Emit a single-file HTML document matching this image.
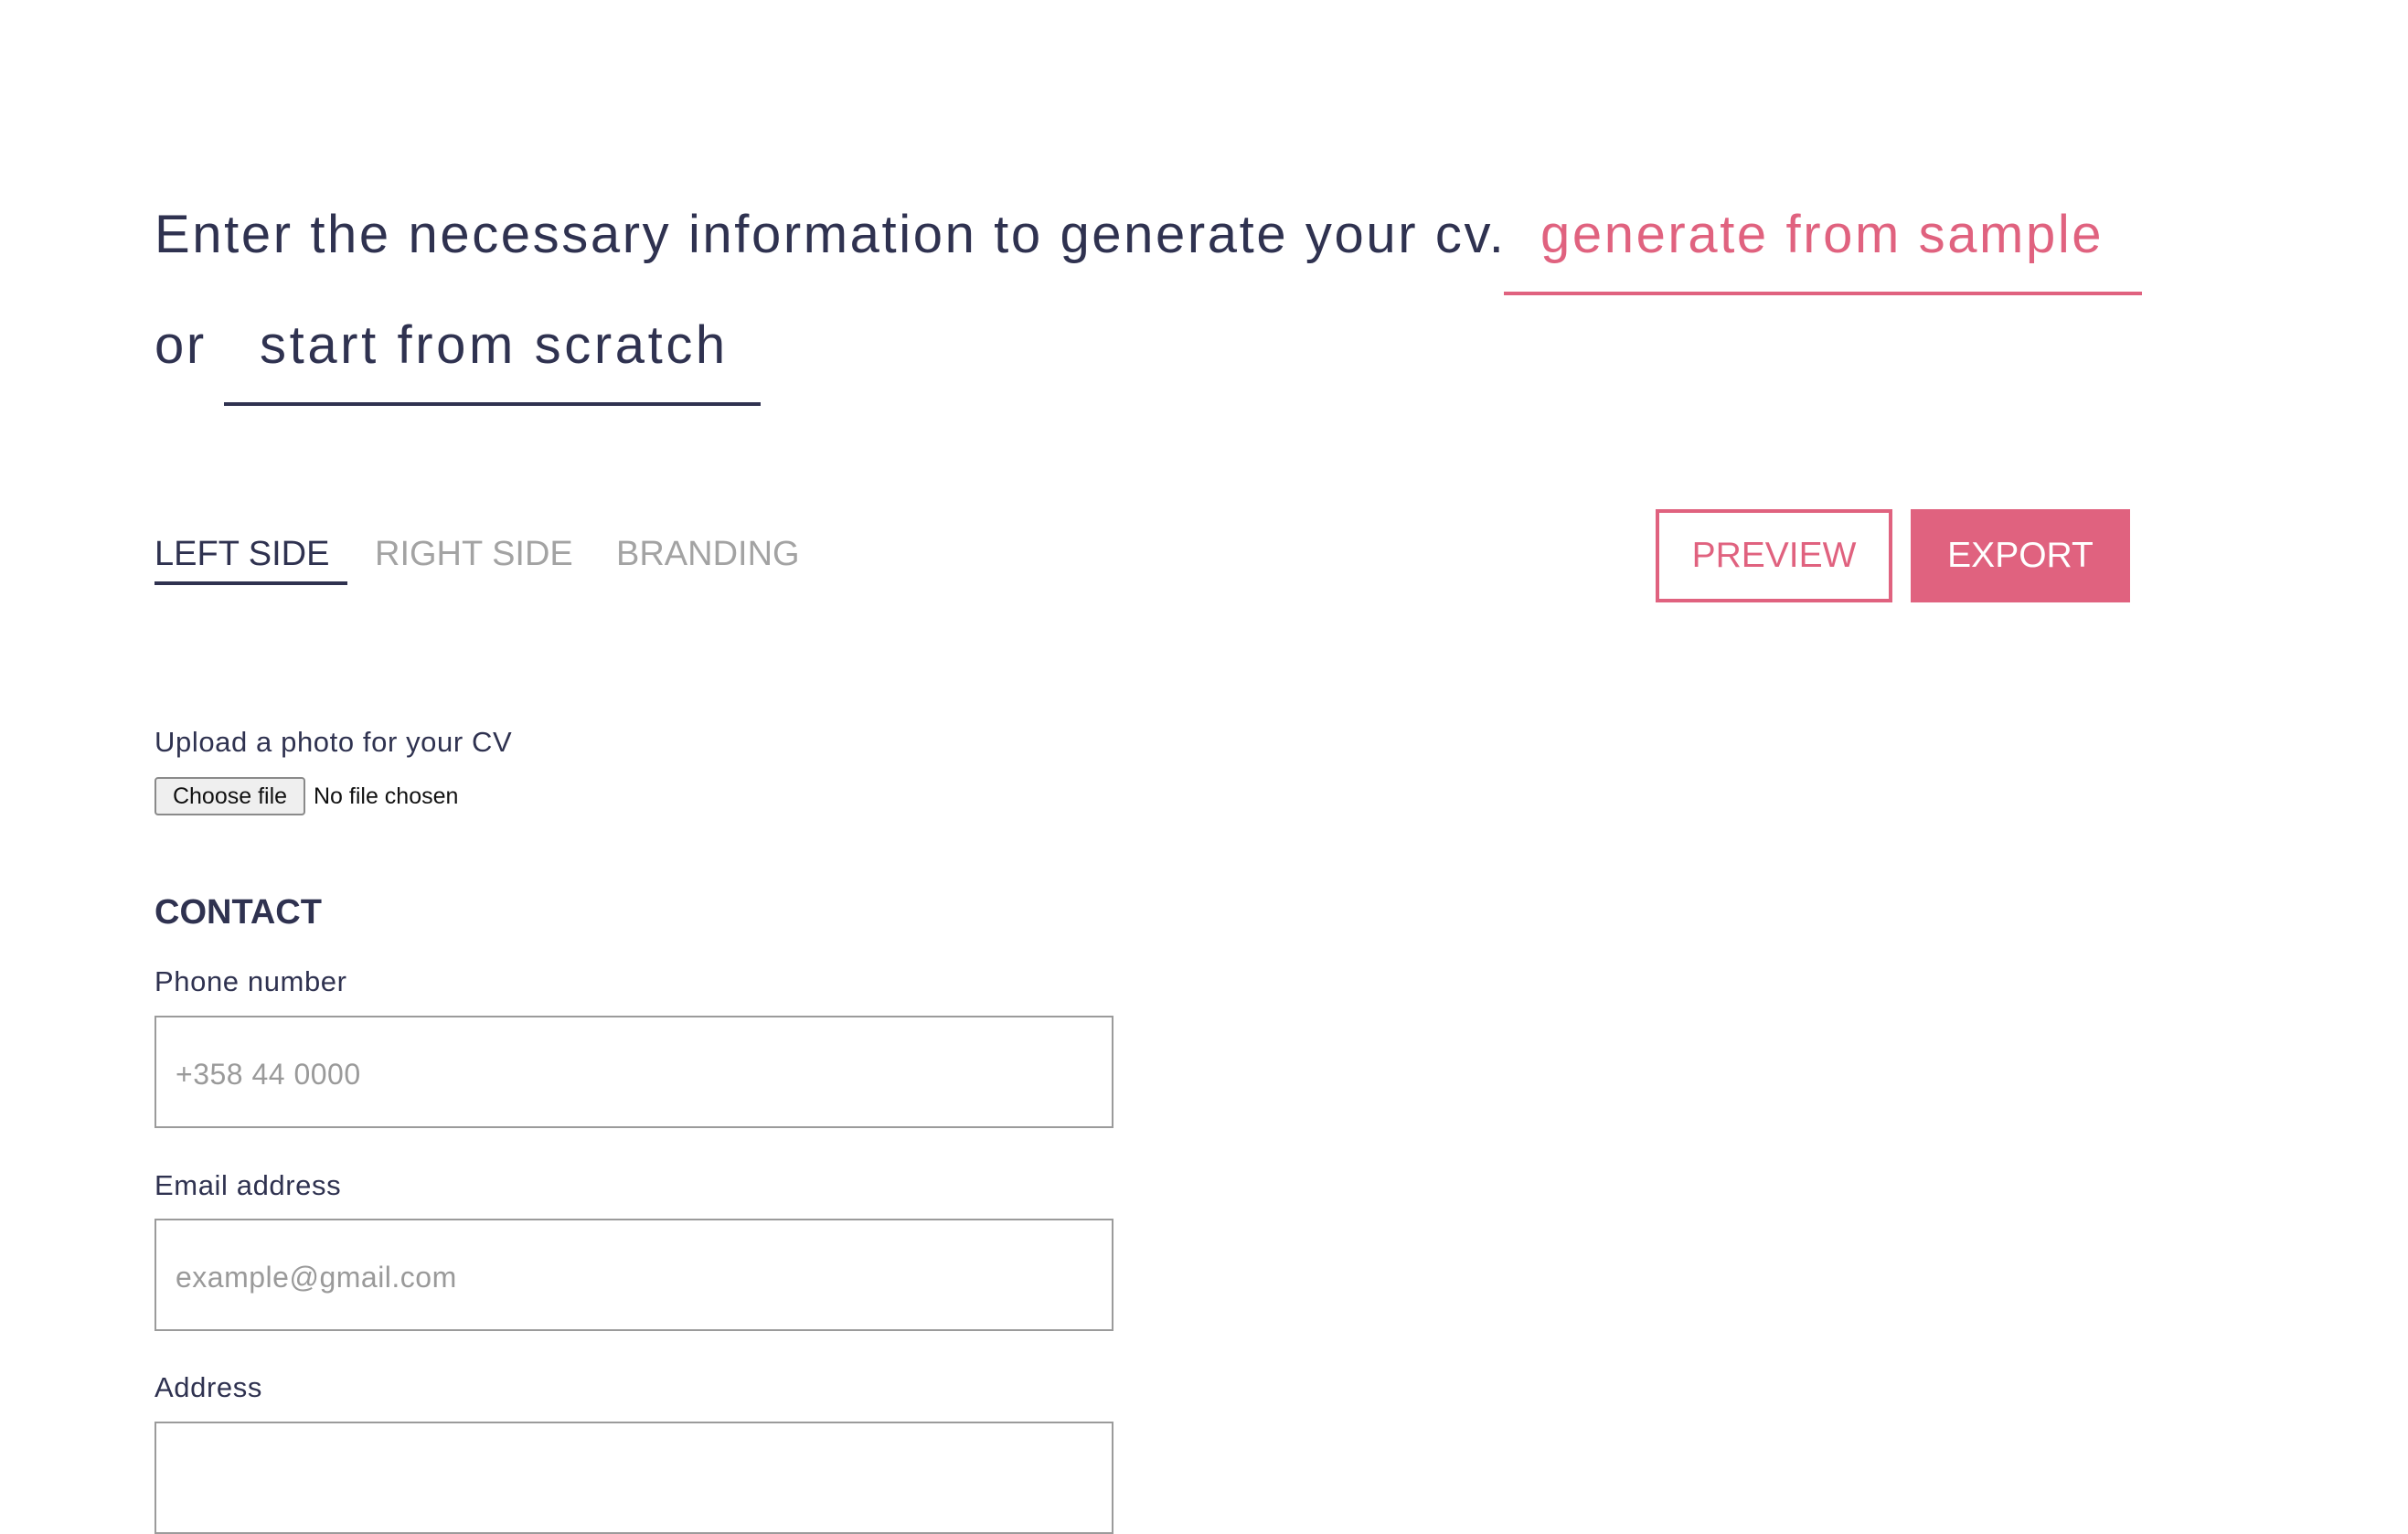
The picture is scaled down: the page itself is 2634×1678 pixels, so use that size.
<!DOCTYPE html>
<html><head><meta charset="utf-8"><style>
*{margin:0;padding:0;box-sizing:border-box}
body{width:2634px;height:1586px;background:#fff;position:relative;overflow:hidden;font-family:"Liberation Sans",sans-serif;color:#2f3250}
.a{position:absolute;white-space:nowrap}
.h{font-size:58px;line-height:1;letter-spacing:2.6px}
.pink{color:#e0627f}
.tab{font-size:38px;line-height:1;top:587px}
.lbl{font-size:31px;line-height:1;left:169px;letter-spacing:0.6px}
.inp{position:absolute;left:169px;width:1049px;height:123px;border:2px solid #9b9b9b;background:#fff}
.ph{position:absolute;left:21px;top:44px;font-size:32px;color:#9a9a9a;letter-spacing:0.5px}
</style></head><body>
<div class="a h" style="left:169px;top:228px">Enter the necessary information to generate your cv.</div>
<div class="a h pink" style="left:1685px;top:228px">generate from sample</div>
<div class="a" style="left:1645px;top:319px;width:698px;height:4px;background:#e0627f"></div>
<div class="a h" style="left:169px;top:349px">or</div>
<div class="a h" style="left:284px;top:349px;letter-spacing:3.6px">start from scratch</div>
<div class="a" style="left:245px;top:440px;width:587px;height:4px;background:#2f3250"></div>

<div class="a tab" style="left:169px">LEFT SIDE</div>
<div class="a" style="left:169px;top:636px;width:211px;height:4px;background:#2f3250"></div>
<div class="a tab" style="left:410px;color:#a3a3a3">RIGHT SIDE</div>
<div class="a tab" style="left:674px;color:#a3a3a3">BRANDING</div>

<div class="a" style="left:1811px;top:557px;width:259px;height:102px;border:4px solid #e0627f;color:#e0627f;font-size:39px;display:flex;align-items:center;justify-content:center">PREVIEW</div>
<div class="a" style="left:2090px;top:557px;width:240px;height:102px;background:#e0627f;color:#fff;font-size:39px;display:flex;align-items:center;justify-content:center">EXPORT</div>

<div class="a lbl" style="top:796px">Upload a photo for your CV</div>
<div class="a" style="left:169px;top:850px;width:165px;height:42px;border:2px solid #8a8a8a;border-radius:4px;background:#efefef;font-size:25px;color:#111;display:flex;align-items:center;justify-content:center">Choose file</div>
<div class="a" style="left:343px;top:857px;font-size:25px;color:#111">No file chosen</div>

<div class="a" style="left:169px;top:979px;font-size:38px;font-weight:bold;line-height:1">CONTACT</div>
<div class="a lbl" style="top:1058px">Phone number</div>
<div class="inp" style="top:1111px"><span class="ph">+358 44 0000</span></div>
<div class="a lbl" style="top:1281px">Email address</div>
<div class="inp" style="top:1333px"><span class="ph">example@gmail.com</span></div>
<div class="a lbl" style="top:1502px">Address</div>
<div class="inp" style="top:1555px"></div>
</body></html>
